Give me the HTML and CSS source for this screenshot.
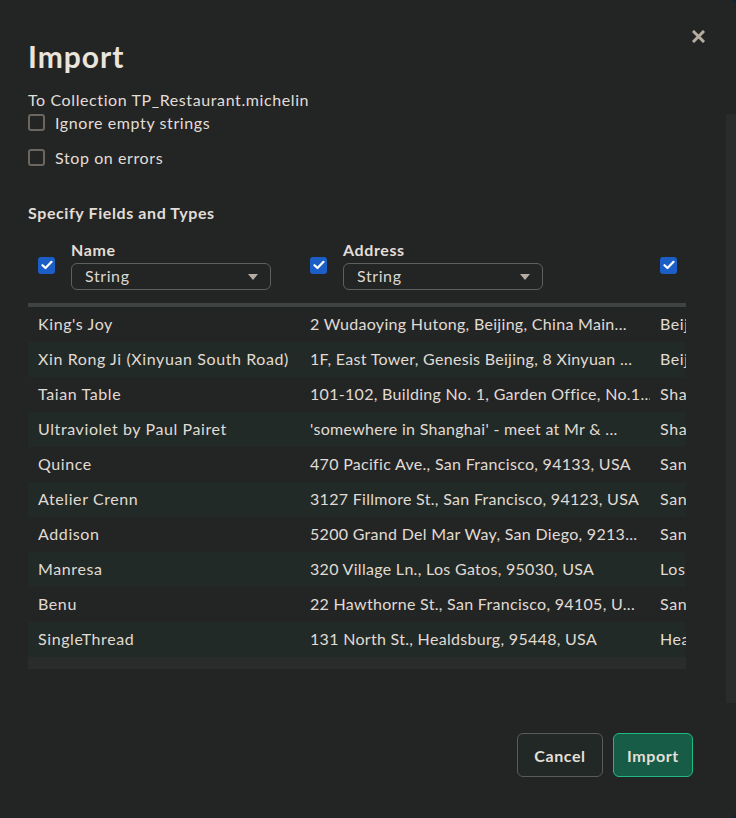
FILE: index.html
```html
<!DOCTYPE html>
<html>
<head>
<meta charset="utf-8">
<link rel="stylesheet" href="styles.css">
</head>
<body>
<div class="modal">
  <button class="close" aria-label="Close">
    <svg width="13" height="13" viewBox="0 0 13 13"><path d="M2 2 L11 11 M11 2 L2 11" stroke="#b7ad9f" stroke-width="3" stroke-linecap="square"/></svg>
  </button>
  <div class="vscroll"></div>
  <h1 class="title">Import</h1>
  <div class="subtitle">To Collection TP_Restaurant.michelin</div>
  <div class="options">
    <label class="opt"><span class="cb"></span>Ignore empty strings</label>
    <label class="opt"><span class="cb"></span>Stop on errors</label>
  </div>
  <h2 class="section">Specify Fields and Types</h2>
  <div class="table-wrap">
    <div class="grid">
      <div class="th">
        <span class="cb checked"><svg width="12" height="10" viewBox="0 0 12 10"><path d="M1.5 5.2 L4.5 8 L10.5 1.8" fill="none" stroke="#fff" stroke-width="2.2" stroke-linecap="round" stroke-linejoin="round"/></svg></span>
        <div class="field"><div class="fname">Name</div><div class="select">String<span class="caret"></span></div></div>
      </div>
      <div class="th">
        <span class="cb checked"><svg width="12" height="10" viewBox="0 0 12 10"><path d="M1.5 5.2 L4.5 8 L10.5 1.8" fill="none" stroke="#fff" stroke-width="2.2" stroke-linecap="round" stroke-linejoin="round"/></svg></span>
        <div class="field"><div class="fname">Address</div><div class="select">String<span class="caret"></span></div></div>
      </div>
      <div class="th">
        <span class="cb checked"><svg width="12" height="10" viewBox="0 0 12 10"><path d="M1.5 5.2 L4.5 8 L10.5 1.8" fill="none" stroke="#fff" stroke-width="2.2" stroke-linecap="round" stroke-linejoin="round"/></svg></span>
        <div class="field"><div class="fname">City</div><div class="select">String<span class="caret"></span></div></div>
      </div>

      <div class="td">King's Joy</div><div class="td addr">2 Wudaoying Hutong, Beijing, China Main...</div><div class="td">Beijing</div>
      <div class="td s">Xin Rong Ji (Xinyuan South Road)</div><div class="td addr s">1F, East Tower, Genesis Beijing, 8 Xinyuan ...</div><div class="td s">Beijing</div>
      <div class="td">Taian Table</div><div class="td addr">101-102, Building No. 1, Garden Office, No.1...</div><div class="td">Shanghai</div>
      <div class="td s">Ultraviolet by Paul Pairet</div><div class="td addr s">'somewhere in Shanghai' - meet at Mr &amp; ...</div><div class="td s">Shanghai</div>
      <div class="td">Quince</div><div class="td addr">470 Pacific Ave., San Francisco, 94133, USA</div><div class="td">San Francisco</div>
      <div class="td s">Atelier Crenn</div><div class="td addr s">3127 Fillmore St., San Francisco, 94123, USA</div><div class="td s">San Francisco</div>
      <div class="td">Addison</div><div class="td addr">5200 Grand Del Mar Way, San Diego, 9213...</div><div class="td">San Diego</div>
      <div class="td s">Manresa</div><div class="td addr s">320 Village Ln., Los Gatos, 95030, USA</div><div class="td s">Los Gatos</div>
      <div class="td">Benu</div><div class="td addr">22 Hawthorne St., San Francisco, 94105, U...</div><div class="td">San Francisco</div>
      <div class="td s">SingleThread</div><div class="td addr s">131 North St., Healdsburg, 95448, USA</div><div class="td s">Healdsburg</div>
    </div>
    <div class="hscroll"></div>
  </div>
  <div class="footer">
    <button class="btn cancel">Cancel</button>
    <button class="btn primary">Import</button>
  </div>
</div>
</body>
</html>
```

FILE: styles.css
```css
html, body {
  margin: 0;
  padding: 0;
  height: 100%;
  overflow: hidden;
  background: #0f2432;
}
body {
  font-family: "Lato", "Liberation Sans", sans-serif;
  letter-spacing: 0.6px;
  color: #e2ddd6;
}
.modal {
  position: relative;
  box-sizing: border-box;
  margin: -4px -6px 0 0;
  height: 826px;
  background: #232525;
  border-radius: 0 24px 24px 0;
  padding: 43px 49px 0 28px;
  display: flex;
  flex-direction: column;
}
.close {
  position: absolute;
  top: 34px;
  right: 37px;
  width: 13px;
  height: 13px;
  padding: 0;
  border: 0;
  background: none;
  display: flex;
}
.vscroll {
  position: absolute;
  right: 6px;
  top: 118px;
  width: 10px;
  height: 589px;
  background: #2a2c2c;
}
.title {
  margin: 0;
  font-size: 30px;
  line-height: 35px;
  font-weight: 700;
  letter-spacing: 1px;
  color: #e9e4dc;
}
.subtitle {
  margin-top: 16px;
  font-size: 16px;
  line-height: 20px;
}
.options {
  display: flex;
  flex-direction: column;
  gap: 11px;
}
.opt {
  display: flex;
  align-items: center;
  gap: 10px;
  height: 24px;
  font-size: 16px;
}
.cb {
  box-sizing: border-box;
  width: 17px;
  height: 17px;
  flex: none;
  border: 2px solid #6c665f;
  border-radius: 3px;
  display: flex;
  align-items: center;
  justify-content: center;
}
.cb.checked {
  border: 0;
  background: #1b5ec6;
}
.section {
  margin: 34px 0 0;
  font-size: 16px;
  line-height: 20px;
  font-weight: 700;
  color: #e2ddd6;
}
.table-wrap {
  margin-top: 17px;
  width: 658px;
  overflow: hidden;
}
.grid {
  display: grid;
  grid-template-columns: 272px 350px 200px;
}
.th {
  display: flex;
  align-items: center;
  gap: 16px;
  padding: 0 10px 13px;
  border-bottom: 4px solid #404343;
}
.field {
  display: flex;
  flex-direction: column;
  gap: 3px;
}
.fname {
  font-size: 16px;
  line-height: 20px;
  font-weight: 700;
}
.select {
  box-sizing: border-box;
  position: relative;
  width: 200px;
  height: 27px;
  border: 1px solid #5e5f5f;
  border-radius: 6px;
  padding: 0 13px;
  font-size: 16px;
  line-height: 24px;
  color: #ddd8d1;
}
.caret {
  position: absolute;
  right: 12px;
  top: 10px;
  width: 0;
  height: 0;
  border-left: 5px solid transparent;
  border-right: 5px solid transparent;
  border-top: 6px solid #b5ada3;
}
.td {
  height: 35px;
  line-height: 34px;
  padding: 0 10px;
  font-size: 16px;
  white-space: nowrap;
  overflow: hidden;
  color: #e0dbd4;
}
.td.addr {
  letter-spacing: 0.3px;
}
.td.s {
  background: #212a26;
}
.hscroll {
  height: 12px;
  background: #2a2c2c;
}
.footer {
  margin-top: 64px;
  display: flex;
  justify-content: flex-end;
  gap: 10px;
}
.btn {
  height: 44px;
  box-sizing: border-box;
  border-radius: 6px;
  font-family: "Lato", "Liberation Sans", sans-serif;
  font-size: 16px;
  font-weight: 700;
  letter-spacing: 0.6px;
  color: #e4dfd7;
  padding: 0 10px;
}
.cancel {
  width: 86px;
  background: #222826;
  border: 1px solid #5a5c5b;
}
.primary {
  width: 80px;
  background: #165c46;
  border: 1px solid #22b886;
}
```
